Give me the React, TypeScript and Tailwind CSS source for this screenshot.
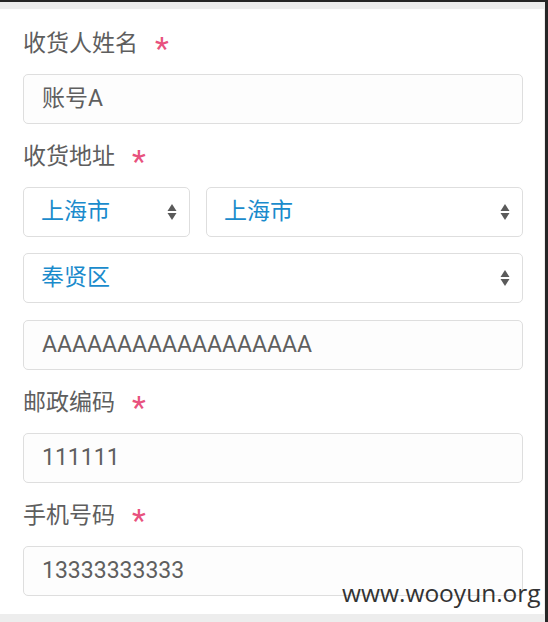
import React from "react";

const Star = () => (
  <span className="ml-[17px] text-[#e8527e] text-[32px] leading-none relative top-[4px]">*</span>
);

const Arrows = () => (
  <svg width="10" height="18" viewBox="0 0 10 18" className="shrink-0">
    <path d="M5 1 L9.5 8 L0.5 8 Z" fill="#5a5a5a" />
    <path d="M5 17 L9.5 10 L0.5 10 Z" fill="#5a5a5a" />
  </svg>
);

const Label = ({ text, first }: { text: string; first?: boolean }) => (
  <div className={(first ? "mt-[20px]" : "mt-[18px]") + " mb-[15px] h-[30px] flex items-center text-[23px] text-[#5e5e5e]"}>
    <span>{text}</span>
    <Star />
  </div>
);

const Field = ({ value }: { value: string }) => (
  <div className="h-[50px] border border-[#dedede] rounded-[5px] bg-[#fdfdfd] flex items-center pl-[18px] text-[23px] text-[#5f5f5f]">
    {value}
  </div>
);

const Select = ({ value, className }: { value: string; className?: string }) => (
  <div className={"h-[50px] border border-[#dedede] rounded-[5px] bg-white flex items-center justify-between pl-[17px] pr-[12px] text-[23px] text-[#1a8bcc] " + (className ?? "")}>
    <span>{value}</span>
    <Arrows />
  </div>
);

export default function App() {
  return (
    <div className="h-[622px] w-[548px] bg-[#262626] pt-[2px] pr-[3px] flex flex-col" style={{ fontFamily: "Roboto, 'Noto Sans CJK SC', sans-serif" }}>
      <div className="flex-1 bg-[#ededed] pt-[7px] pr-[1px] pb-[8px] flex flex-col">
        <div className="flex-1 bg-white pl-[23px] pr-[21px] overflow-hidden">
          <Label text="收货人姓名" first />
          <Field value="账号A" />
          <Label text="收货地址" />
          <div className="flex gap-[16px]">
            <Select value="上海市" className="w-[167px]" />
            <Select value="上海市" className="flex-1" />
          </div>
          <Select value="奉贤区" className="mt-[16px]" />
          <div className="mt-[17px]">
            <Field value="AAAAAAAAAAAAAAAAAA" />
          </div>
          <Label text="邮政编码" />
          <Field value="111111" />
          <Label text="手机号码" />
          <Field value="13333333333" />
        </div>
      </div>
      <div className="absolute left-[342px] top-[578px] text-[24.5px] text-[#333] leading-[30px]" style={{ fontFamily: "'Open Sans', sans-serif" }}>
        www.wooyun.org
      </div>
    </div>
  );
}
